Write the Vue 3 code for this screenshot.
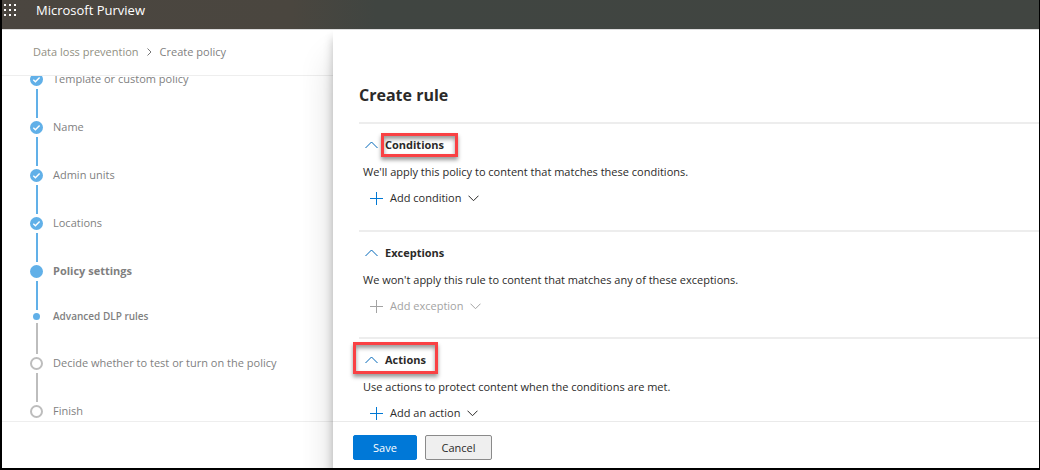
<script setup>
const steps = [
  { label: 'Template or custom policy', state: 'done' },
  { label: 'Name', state: 'done' },
  { label: 'Admin units', state: 'done' },
  { label: 'Locations', state: 'done' },
  { label: 'Policy settings', state: 'current' },
  { label: 'Advanced DLP rules', state: 'sub' },
  { label: 'Decide whether to test or turn on the policy', state: 'todo' },
  { label: 'Finish', state: 'todo' },
]

const sections = [
  {
    title: 'Conditions',
    text: "We'll apply this policy to content that matches these conditions.",
    action: 'Add condition',
    mark: 'title',
  },
  {
    title: 'Exceptions',
    text: "We won't apply this rule to content that matches any of these exceptions.",
    action: 'Add exception',
    disabled: true,
  },
  {
    title: 'Actions',
    text: 'Use actions to protect content when the conditions are met.',
    action: 'Add an action',
    mark: 'heading',
  },
]
</script>

<template>
  <div class="page">
    <header class="topbar">
      <button class="launcher" type="button" aria-label="App launcher">
        <svg width="12" height="12" viewBox="0 0 12 12" fill="#fff" shape-rendering="crispEdges">
          <template v-for="r in 3" :key="r">
            <rect v-for="c in 3" :key="c" :x="c * 5 - 5" :y="r * 5 - 5" width="2" height="2" />
          </template>
        </svg>
      </button>
      <span class="brand">Microsoft Purview</span>
    </header>

    <div class="content">
      <aside class="side">
        <nav class="crumbs" aria-label="Breadcrumb">
          <a href="#">Data loss prevention</a>
          <svg width="5" height="8" viewBox="0 0 5 8" fill="none" stroke="#777">
            <path d="M.5 .5 4 4 .5 7.5" />
          </svg>
          <span>Create policy</span>
        </nav>
        <div class="steps-view">
          <ol class="steps">
            <li v-for="s in steps" :key="s.label" class="step" :class="s.state">
              <div class="rail">
                <span class="marker">
                  <svg v-if="s.state === 'done'" width="13" height="13" viewBox="0 0 13 13" fill="none" stroke="#fff" stroke-width="1.4">
                    <path d="M3.3 6.8 5.4 8.8 9.6 4.4" />
                  </svg>
                </span>
                <span class="line"></span>
              </div>
              <span class="label">{{ s.label }}</span>
            </li>
          </ol>
        </div>
        <div class="side-foot"></div>
      </aside>

      <main class="panel">
        <div class="body">
          <h1>Create rule</h1>
          <section v-for="s in sections" :key="s.title">
            <h2 :class="{ marked: s.mark === 'heading' }">
              <button class="toggle" type="button" aria-expanded="true">
                <svg width="13" height="8" viewBox="0 0 13 8" fill="none" stroke="#0067b8">
                  <path d="M.5 7 6.5 1l6 6" />
                </svg>
                <span class="name" :class="{ marked: s.mark === 'title' }">{{ s.title }}</span>
              </button>
            </h2>
            <p>{{ s.text }}</p>
            <button class="add" type="button" :disabled="s.disabled">
              <svg class="plus" width="13" height="13" viewBox="0 0 13 13" fill="none">
                <path d="M6.5 0v13M0 6.5h13" />
              </svg>
              <span>{{ s.action }}</span>
              <svg width="11" height="7" viewBox="0 0 11 7" fill="none" stroke="currentColor">
                <path d="M.5 .7 5.5 5.7l5-5" />
              </svg>
            </button>
          </section>
        </div>
        <footer class="foot">
          <button class="btn primary" type="button">Save</button>
          <button class="btn" type="button">Cancel</button>
        </footer>
      </main>
    </div>
  </div>
</template>

<style>
body {
  margin: 0;
}
</style>

<style scoped>
* {
  box-sizing: border-box;
}
.page {
  display: flex;
  flex-direction: column;
  min-height: 100vh;
  border: solid #000;
  border-width: 0 1px 2px 2px;
  background: #fff;
  color: #2b2a29;
  font-family: "Open Sans", "Noto Sans", sans-serif;
  font-size: 11px;
  line-height: 16px;
}
button {
  padding: 0;
  border: 0;
  background: none;
  color: inherit;
  font: inherit;
}
.topbar {
  display: flex;
  align-items: flex-start;
  gap: 20px;
  height: 29px;
  padding: 2px;
  background: linear-gradient(90deg, #4b4640, #4a463f 28%, #404541 36%, #414541);
  color: #fff;
}
.launcher {
  height: 14px;
  padding-top: 1px;
  line-height: 0;
}
.brand {
  font-size: 13px;
}
.content {
  display: flex;
  flex: 1;
  border-top: 1px solid #ddd;
}
.side {
  display: flex;
  flex-direction: column;
  flex: 0 0 331px;
  color: #7f7f7f;
}
.crumbs {
  display: flex;
  align-items: center;
  gap: 8px;
  height: 46px;
  padding: 0 0 2px 31px;
  border-bottom: 1px solid #eee;
}
.crumbs a {
  color: #918f83;
  text-decoration: none;
}
.steps-view {
  flex: 1;
  overflow: hidden;
}
.steps {
  margin: -3px 0 0;
  padding: 0 0 0 28px;
  list-style: none;
}
.step {
  display: flex;
  gap: 10px;
  height: 48px;
}
.step.sub {
  height: 44px;
}
.step:last-child {
  height: 16px;
}
.rail {
  display: flex;
  flex-direction: column;
  align-items: center;
  gap: 3px;
  width: 13px;
  padding-bottom: 3px;
}
.marker {
  flex: none;
  width: 13px;
  height: 13px;
  border-radius: 50%;
  background: #61b0e8;
}
.marker svg {
  display: block;
}
.sub .marker {
  width: 7px;
  height: 7px;
}
.todo .marker {
  border: 2px solid #bdbdbd;
  background: #fff;
}
.line {
  flex: 1;
  width: 2px;
  background: #61b0e8;
}
.sub .line,
.todo .line {
  background: #bdbdbd;
}
.step:last-child .line {
  display: none;
}
.label {
  line-height: 12px;
}
.current .label {
  font-weight: 700;
}
.sub .label {
  font-size: 10px;
  font-weight: 600;
  line-height: 7px;
}
.side-foot {
  height: 47px;
  border-top: 1px solid #eee;
}
.panel {
  display: flex;
  flex: 1;
  flex-direction: column;
  min-width: 0;
  background: #fff;
  box-shadow: 0 30px 32px rgba(0, 0, 0, 0.16), 0 8px 9px rgba(0, 0, 0, 0.24);
  clip-path: inset(0 0 0 -30px);
}
.body {
  flex: 1;
  padding: 53px 0 0 26px;
}
h1 {
  margin: 0 0 15px;
  font-size: 16px;
  line-height: 24px;
}
section {
  height: 108px;
  padding: 13px 0 0 4px;
  border-top: 2px solid #ededed;
}
section:nth-of-type(2) {
  height: 107px;
}
section:last-child {
  height: 84px;
}
h2 {
  position: relative;
  width: max-content;
  margin: 0;
  font-size: 11px;
  line-height: 16px;
}
.toggle {
  display: flex;
  align-items: center;
  gap: 7px;
  padding-left: 2px;
  font-weight: 700;
}
.name {
  position: relative;
}
.marked::after {
  position: absolute;
  border: 3px solid #f94144;
  box-shadow: 0 3px 4px rgba(0, 0, 0, 0.4), inset 0 3px 4px rgba(0, 0, 0, 0.4);
  content: "";
  pointer-events: none;
}
.name.marked::after {
  inset: -4px -14px -4px -4px;
}
h2.marked::after {
  inset: -10px -12px -6px -10px;
}
p {
  margin: 11px 0 10px;
}
.add {
  display: flex;
  align-items: center;
  gap: 7px;
  padding-left: 7px;
}
.add:disabled {
  color: #a3a3a3;
}
.plus {
  stroke: #0078d4;
}
.add:disabled .plus {
  stroke: #a3a3a3;
}
.foot {
  display: flex;
  gap: 8px;
  height: 47px;
  padding: 13px 20px 0;
  border-top: 1px solid #eaeaea;
}
.btn {
  width: 67px;
  height: 25px;
  border: 1px solid #8a8a8a;
  border-radius: 2px;
  background: #efefef;
}
.btn.primary {
  width: 64px;
  border-color: #0078d7;
  background: #0078d7;
  color: #fff;
}
</style>
